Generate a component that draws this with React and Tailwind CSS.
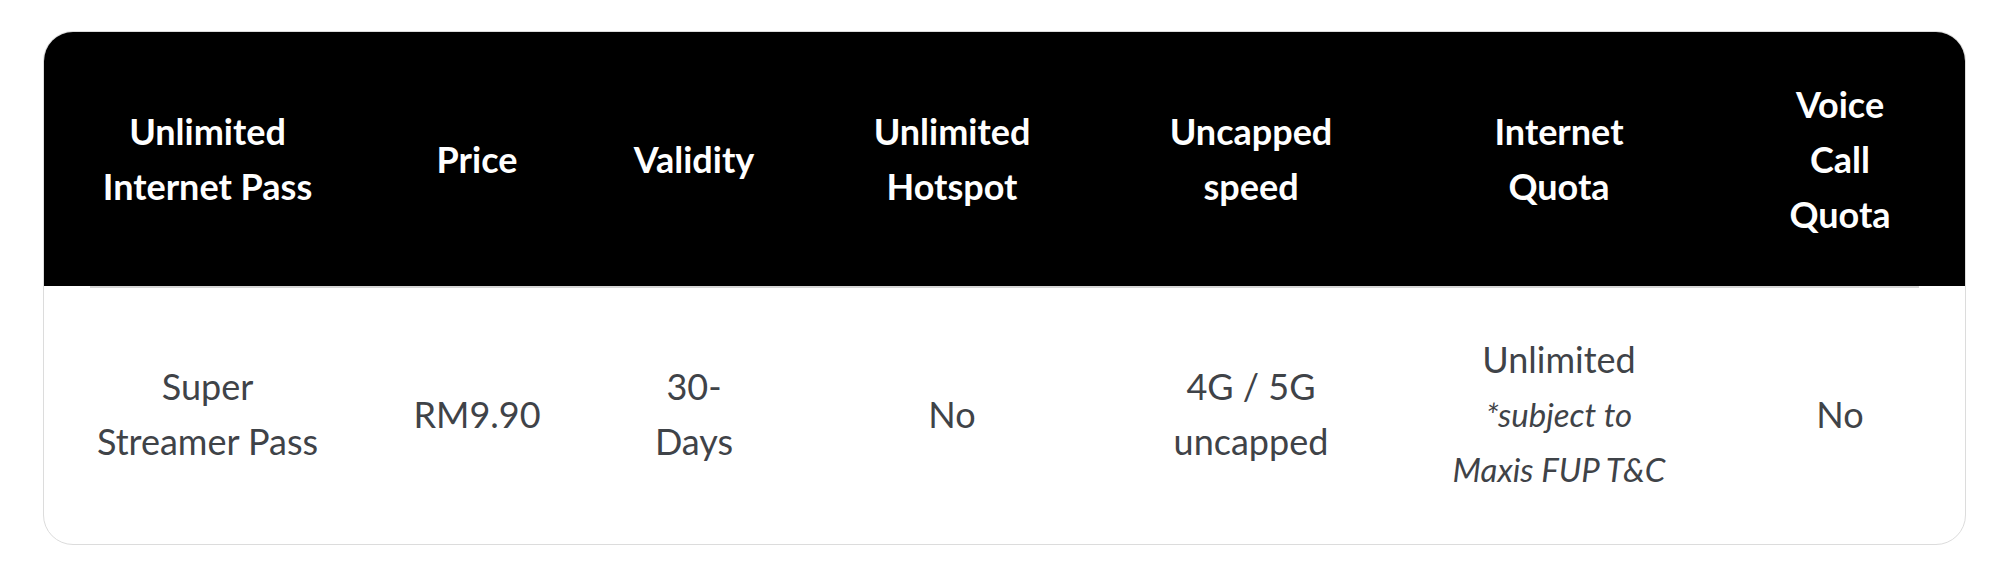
import React from "react";

const cols = "grid grid-cols-[327px_212px_222px_294px_304px_312px_250px]";

const headers = [
  ["Unlimited", "Internet Pass"],
  ["Price"],
  ["Validity"],
  ["Unlimited", "Hotspot"],
  ["Uncapped", "speed"],
  ["Internet", "Quota"],
  ["Voice", "Call", "Quota"],
];

const cells = [
  [{ t: "Super" }, { t: "Streamer Pass" }],
  [{ t: "RM9.90" }],
  [{ t: "30-" }, { t: "Days" }],
  [{ t: "No" }],
  [{ t: "4G / 5G" }, { t: "uncapped" }],
  [{ t: "Unlimited" }, { t: "*subject to", i: true }, { t: "Maxis FUP T&C", i: true }],
  [{ t: "No" }],
];

function App() {
  return (
    <div className="min-h-screen bg-white pt-[31px] pl-[43px] font-['Lato',sans-serif]">
      <div className="w-[1923px] rounded-[30px] border border-[#dcdcdc] overflow-hidden bg-white">
        <div className={`${cols} h-[254px] bg-black text-white`}>
          {headers.map((lines, i) => (
            <div key={i} className="flex flex-col items-center justify-center text-center">
              {lines.map((l) => (
                <span key={l} className="block text-[36px] font-bold leading-[55px]">
                  {l}
                </span>
              ))}
            </div>
          ))}
        </div>
        <div className="mx-[46px] h-[2px] bg-[#d6d6d6]" />
        <div className={`${cols} h-[256px] pb-[4px] text-[#3f4348]`}>
          {cells.map((lines, i) => (
            <div key={i} className="flex flex-col items-center justify-center text-center">
              {lines.map((l) => (
                <span
                  key={l.t}
                  className={`block leading-[55px] ${l.i ? "italic text-[33px]" : "text-[36px]"}`}
                >
                  {l.t}
                </span>
              ))}
            </div>
          ))}
        </div>
      </div>
    </div>
  );
}

export default App;
